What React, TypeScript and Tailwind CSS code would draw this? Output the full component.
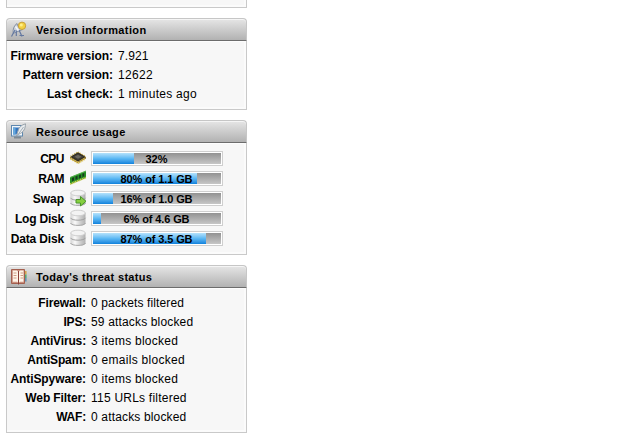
import type { ReactNode } from 'react'

interface PanelProps {
  title: string
  icon: ReactNode
  titleClass: string
  bodyClass: string
  children: ReactNode
}

interface InfoRow {
  label: string
  value: string
  labelClass?: string
  valueClass?: string
}

interface Resource {
  label: string
  percent: number
  text: string
  icon: ReactNode
  labelClass?: string
  textClass?: string
}

function DishIcon() {
  return (
    <svg width="17" height="17" viewBox="0 0 17 17" fill="none">
      <path d="M7 2.5C3.8 4.5 2.6 8.7 3.2 12.4L13 8.4C10 8 7.6 5.8 7 2.5Z" fill="#c9d0da" stroke="#8791a3" />
      <path d="M5 9L1.5 15.5M6.3 9.5V15M9 9L12 15.5M9.5 14.5H14" stroke="#6478a0" strokeWidth="1.2" />
      <path d="M5.5 5.5L8.5 9.5" stroke="#f4f6f9" strokeWidth="1.6" />
      <circle cx="12" cy="4.8" r="3.7" fill="#f3d143" stroke="#c7a03e" />
      <circle cx="11.3" cy="4" r="1.5" fill="#fff08c" />
    </svg>
  )
}

function EditIcon() {
  return (
    <svg width="17" height="17" viewBox="0 0 17 17" fill="none">
      <rect x="1.5" y="2.5" width="11" height="10.5" fill="#f2f7fb" stroke="#5d87ae" />
      <path d="M3 4.5H10L6.5 11.5H3Z" fill="#3575bd" />
      <path d="M3 4.5H5.5V11.5H3Z" fill="#68a9dc" />
      <path d="M6.5 13L8 8C9 4 11.5 2 15.5 .8C15.5 5.5 13.5 9.5 9 11Z" fill="#e9edf0" stroke="#98a2aa" />
      <path d="M7 13L13.5 4" stroke="#a3adb5" />
      <path d="M4 14.5H11" stroke="#7d8993" strokeWidth="2" />
    </svg>
  )
}

function BookIcon() {
  return (
    <svg width="17" height="17" viewBox="0 0 17 17" fill="none">
      <path d="M1.5 1.5H14.5V15.5H1.5Z" fill="#c98d7c" stroke="#a3604f" />
      <path d="M2.8 2.5H7L8 3.5V14.5L7 13.8H2.8ZM13.5 2.5H10L9 3.5V14.5L10 13.8H13.5Z" fill="#fff5e8" />
      <path d="M3.5 5H6.5M3.5 7.5H6.5M3.5 10H6.5M10.5 5H13M10.5 7.5H13M10.5 10H13" stroke="#cf9c86" />
      <path d="M8.5 3V16.5" stroke="#8c3f36" />
      <path d="M15.8 3V6.5" stroke="#d7a349" strokeWidth="1.5" />
      <path d="M15.8 6.5V10" stroke="#4eaa73" strokeWidth="1.5" />
      <path d="M15.8 10V13.5" stroke="#5a8db4" strokeWidth="1.5" />
    </svg>
  )
}

function CpuIcon() {
  return (
    <svg width="18" height="18" viewBox="0 0 18 18" fill="none">
      <path d="M1 8L9 3L17 8V9.5L9 14.5L1 9.5Z" fill="#8d7431" />
      <path d="M1.5 9.5L9 14L16.5 9.5" stroke="#e2c95f" strokeWidth="2.2" strokeDasharray="1.2 1" />
      <path d="M1.5 7.5L9 3L16.5 7.5" stroke="#c4ac55" strokeWidth="1.5" strokeDasharray="1.2 1" />
      <path d="M2.5 7.8L9 4L15.5 7.8L9 11.8Z" fill="#403d36" stroke="#2b2a25" />
      <path d="M5.5 7.7L9 5.7L12.5 7.7L9 9.7Z" fill="#6a675e" />
    </svg>
  )
}

function RamIcon() {
  return (
    <svg width="18" height="18" viewBox="0 0 18 18" fill="none">
      <path d="M1 8.5L17 2V9L1 15.5Z" fill="#258f27" />
      <path d="M1 8.5L17 2" stroke="#56b14c" />
      <path d="M1.2 15L16.8 8.6" stroke="#d5ce50" strokeWidth="1.8" strokeDasharray="1.2 .6" />
      <path d="M3 9L5 8.2V11.5L3 12.3ZM6.5 7.6L8.5 6.8V10L6.5 10.8ZM10 6.2L12 5.4V8.7L10 9.5ZM13.4 4.8L15.2 4V7.3L13.4 8Z" fill="#173c1d" />
    </svg>
  )
}

function DiskIcon({ arrow = false }: { arrow?: boolean }) {
  return (
    <svg width="18" height="18" viewBox="0 0 18 18" fill="none">
      <defs>
        <linearGradient id="disk-side" x1="0" x2="1">
          <stop offset="0" stopColor="#d2d2d2" />
          <stop offset=".3" stopColor="#fafafa" />
          <stop offset=".65" stopColor="#d0d0d0" />
          <stop offset="1" stopColor="#b0b0b0" />
        </linearGradient>
      </defs>
      <path d="M1.5 4V14C1.5 17.8 16.5 17.8 16.5 14V4Z" fill="url(#disk-side)" />
      <path d="M1.5 8.8C2.5 12 15.5 12 16.5 8.8" stroke="#a0a0a0" />
      <path d="M1.5 14C2.5 17.2 15.5 17.2 16.5 14" stroke="#a8a8a8" />
      <ellipse cx="9" cy="4" rx="7.3" ry="2.8" fill="#f3f3f3" stroke="#cfcfcf" />
      {arrow && <path d="M7 10.5H11.5V7.5L17 12.3L11.5 17V14H7Z" fill="#86cf3f" stroke="#4b962c" />}
    </svg>
  )
}

const versionRows: InfoRow[] = [
  { label: 'Firmware version:', value: '7.921', labelClass: 'tracking-[-0.05px]', valueClass: 'tracking-[0.1px]' },
  { label: 'Pattern version:', value: '12622', labelClass: 'tracking-[-0.07px]', valueClass: 'tracking-[0.35px]' },
  { label: 'Last check:', value: '1 minutes ago', valueClass: 'tracking-[0.27px]' },
]

const threatRows: InfoRow[] = [
  { label: 'Firewall:', value: '0 packets filtered', labelClass: 'tracking-[-0.1px]', valueClass: 'tracking-[0.13px]' },
  { label: 'IPS:', value: '59 attacks blocked', labelClass: 'tracking-[-0.2px]', valueClass: 'tracking-[0.16px]' },
  { label: 'AntiVirus:', value: '3 items blocked', labelClass: 'tracking-[-0.15px]', valueClass: 'tracking-[0.25px]' },
  { label: 'AntiSpam:', value: '0 emails blocked', labelClass: 'tracking-[-0.15px]', valueClass: 'tracking-[0.28px]' },
  { label: 'AntiSpyware:', value: '0 items blocked', labelClass: 'tracking-[-0.1px]', valueClass: 'tracking-[0.25px]' },
  { label: 'Web Filter:', value: '115 URLs filtered', labelClass: 'tracking-[-0.1px]', valueClass: 'tracking-[0.23px]' },
  { label: 'WAF:', value: '0 attacks blocked', labelClass: 'tracking-[-0.2px]', valueClass: 'tracking-[0.16px]' },
]

const resources: Resource[] = [
  { label: 'CPU', percent: 32, text: '32%', icon: <CpuIcon />, labelClass: 'tracking-[-0.5px]' },
  { label: 'RAM', percent: 81, text: '80% of 1.1 GB', icon: <RamIcon />, labelClass: 'tracking-[-0.5px]', textClass: 'tracking-[-0.12px]' },
  { label: 'Swap', percent: 16, text: '16% of 1.0 GB', icon: <DiskIcon arrow />, textClass: 'tracking-[-0.12px]' },
  { label: 'Log Disk', percent: 6, text: '6% of 4.6 GB', icon: <DiskIcon />, labelClass: 'tracking-[-0.2px]', textClass: 'tracking-[-0.12px]' },
  { label: 'Data Disk', percent: 88, text: '87% of 3.5 GB', icon: <DiskIcon />, labelClass: 'tracking-[-0.15px]', textClass: 'tracking-[-0.12px]' },
]

function Panel({ title, icon, titleClass, bodyClass, children }: PanelProps) {
  return (
    <section className="w-[241px]">
      <header className="flex h-[23px] items-center rounded-t-[4px] border border-[#c6c6c6] border-b-[#6c6c6c] bg-linear-to-b from-[#e6e6e6] to-[#b2b2b2] pl-[3px] shadow-[inset_0_1px_0_#f5f5f5]">
        {icon}
        <h2 className={`ml-[9px] pt-px text-[11px] leading-[20px] font-bold whitespace-nowrap ${titleClass}`}>{title}</h2>
      </header>
      <div className={`border border-t-0 border-[#c9c9c9] bg-[#f7f7f7] shadow-[inset_-2px_-2px_0_#fbfbfb,inset_0_1px_0_#fdfdfd] ${bodyClass}`}>
        {children}
      </div>
    </section>
  )
}

function InfoRows({ rows, labelWidth }: { rows: InfoRow[]; labelWidth: string }) {
  return (
    <>
      {rows.map((row) => (
        <div key={row.label} className="flex h-[19px] text-[12px] leading-[19px] whitespace-nowrap">
          <span className={`flex justify-end font-bold ${labelWidth} ${row.labelClass ?? ''}`}>{row.label}</span>
          <span className={`ml-[5px] ${row.valueClass ?? ''}`}>{row.value}</span>
        </div>
      ))}
    </>
  )
}

function ResourceRow({ resource }: { resource: Resource }) {
  return (
    <div className="flex h-5 whitespace-nowrap">
      <span className={`flex w-[57px] justify-end text-[12px] leading-5 font-bold ${resource.labelClass ?? ''}`}>{resource.label}</span>
      <span className="ml-[5px] w-[18px]">{resource.icon}</span>
      <div className="mt-[2px] ml-[4px] h-[15px] w-[132px] border border-[#cfcfcf] bg-white p-px">
        <div className="relative h-[11px] bg-linear-to-b from-[#929292] to-[#c6c6c6]">
          <div
            className="h-full bg-linear-to-b from-[#b4e2fb] via-[#5cb8f3] to-[#0b82dc]"
            style={{ width: `${resource.percent}%` }}
          />
          <span className={`absolute inset-x-0 top-0 pr-px text-center text-[11px] leading-[12px] font-bold ${resource.textClass ?? ''}`}>
            {resource.text}
          </span>
        </div>
      </div>
    </div>
  )
}

export default function App() {
  return (
    <main className="h-[435px] overflow-hidden bg-white pl-[6px] font-['Liberation_Sans',Arial,sans-serif] text-black">
      <div className="flex flex-col gap-[10px]">
        <div className="h-[8px] w-[241px] border border-t-0 border-[#c9c9c9] bg-[#f7f7f7] shadow-[inset_-2px_-2px_0_#fbfbfb]" />
        <Panel title="Version information" icon={<DishIcon />} titleClass="tracking-[0.38px]" bodyClass="h-[69px] pt-[6px]">
          <InfoRows rows={versionRows} labelWidth="w-[106px]" />
        </Panel>
        <Panel title="Resource usage" icon={<EditIcon />} titleClass="tracking-[0.33px]" bodyClass="h-[112px] pt-[6px]">
          {resources.map((resource) => (
            <ResourceRow key={resource.label} resource={resource} />
          ))}
        </Panel>
        <Panel title="Today's threat status" icon={<BookIcon />} titleClass="tracking-[0.33px]" bodyClass="h-[145px] pt-[6px]">
          <InfoRows rows={threatRows} labelWidth="w-[79px]" />
        </Panel>
      </div>
    </main>
  )
}
